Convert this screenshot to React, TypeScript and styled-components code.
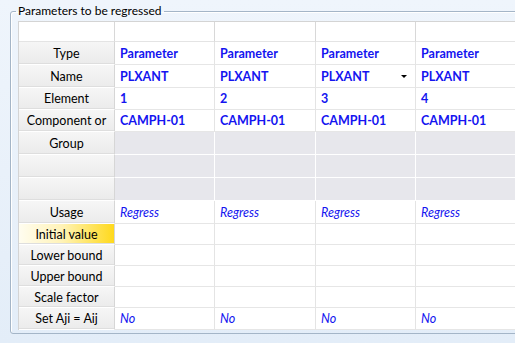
import { Fragment } from 'react';
import styled, { createGlobalStyle } from 'styled-components';

const GlobalStyle = createGlobalStyle`
  html, body {
    margin: 0;
    padding: 0;
  }
  body {
    background: linear-gradient(#eff5fc, #e3edf8);
    font-family: 'Lato', 'Noto Sans', sans-serif;
    font-size: 12px;
    color: #000;
  }
`;

const Page = styled.div`
  width: 515px;
  height: 343px;
  padding-top: 3px;
  box-sizing: border-box;
  overflow: hidden;
`;

const GroupBox = styled.fieldset`
  margin: 0 0 0 10px;
  padding: 2px 0 3px 7px;
  width: 530px;
  border: 1px solid #a4b5c7;
  border-radius: 3px;
  box-shadow: inset 1px 1px 0 #fff;
  min-width: 0;
`;

const Legend = styled.legend`
  margin-left: -2px;
  padding: 0 3px 0 2px;
  line-height: 16px;
  font-size: 12px;
  color: #000;
`;

const Grid = styled.div`
  display: grid;
  grid-template-columns: 96px 100px 101px 100px 120px;
  grid-template-rows: 20px 23px 23px 22px 22px 23px 23px 23px 23px 21px 21px 21px 21px 22px;
  border-top: 1px solid #d4d4d4;
  border-left: 1px solid #d4d4d4;
  background: #fff;
  font-size: 12.5px;
`;

const ColHead = styled.div`
  background: #fff;
  border-right: 1px solid #d8d8d8;
  border-bottom: 1px solid #e4e4e4;
`;

const RowHead = styled.div<{ $active?: boolean }>`
  display: flex;
  align-items: center;
  justify-content: center;
  background: ${({ $active }) =>
    $active
      ? 'linear-gradient(90deg, #fffdf0 0%, #fff3b8 45%, #ffd91c 100%)'
      : 'linear-gradient(#f6f6f6, #ebebeb)'};
  border-right: 1px solid #d6d6d6;
  border-bottom: 1px solid #ffffff;
  box-shadow: inset 0 -1px 0 #dedede;
  color: #000;
  white-space: nowrap;
  overflow: hidden;
`;

const Cell = styled.div<{ $shaded?: boolean; $italic?: boolean }>`
  position: relative;
  display: flex;
  align-items: center;
  padding-left: 5px;
  background: ${({ $shaded }) => ($shaded ? '#e7e7ec' : '#fff')};
  border-right: 1px solid ${({ $shaded }) => ($shaded ? '#fff' : '#e4e4e4')};
  border-bottom: 1px solid ${({ $shaded }) => ($shaded ? '#fff' : '#e6e6e6')};
  color: #1414f0;
  font-weight: ${({ $italic }) => ($italic ? 400 : 700)};
  font-style: ${({ $italic }) => ($italic ? 'italic' : 'normal')};
  white-space: nowrap;
  overflow: hidden;
`;

const DropArrow = styled.span`
  position: absolute;
  right: 8px;
  top: 10px;
  width: 0;
  height: 0;
  border-left: 3px solid transparent;
  border-right: 3px solid transparent;
  border-top: 3px solid #000;
`;

type RowDef = {
  label: string;
  values?: string[];
  shaded?: boolean;
  italic?: boolean;
  active?: boolean;
};

const rows: RowDef[] = [
  { label: 'Type', values: ['Parameter', 'Parameter', 'Parameter', 'Parameter'] },
  { label: 'Name', values: ['PLXANT', 'PLXANT', 'PLXANT', 'PLXANT'] },
  { label: 'Element', values: ['1', '2', '3', '4'] },
  { label: 'Component or', values: ['CAMPH-01', 'CAMPH-01', 'CAMPH-01', 'CAMPH-01'] },
  { label: 'Group', shaded: true },
  { label: '', shaded: true },
  { label: '', shaded: true },
  { label: 'Usage', values: ['Regress', 'Regress', 'Regress', 'Regress'], italic: true },
  { label: 'Initial value', active: true },
  { label: 'Lower bound' },
  { label: 'Upper bound' },
  { label: 'Scale factor' },
  { label: 'Set Aji = Aij', values: ['No', 'No', 'No', 'No'], italic: true },
];

const columns = [0, 1, 2, 3];

export default function App() {
  return (
    <Page>
      <GlobalStyle />
      <GroupBox>
        <Legend>Parameters to be regressed</Legend>
        <Grid>
          <ColHead />
          {columns.map((c) => (
            <ColHead key={c} />
          ))}
          {rows.map((row, r) => (
            <Fragment key={r}>
              <RowHead $active={row.active}>{row.label}</RowHead>
              {columns.map((c) => (
                <Cell key={c} $shaded={row.shaded} $italic={row.italic}>
                  {row.values ? row.values[c] : ''}
                  {row.label === 'Name' && c === 2 ? <DropArrow /> : null}
                </Cell>
              ))}
            </Fragment>
          ))}
        </Grid>
      </GroupBox>
    </Page>
  );
}
